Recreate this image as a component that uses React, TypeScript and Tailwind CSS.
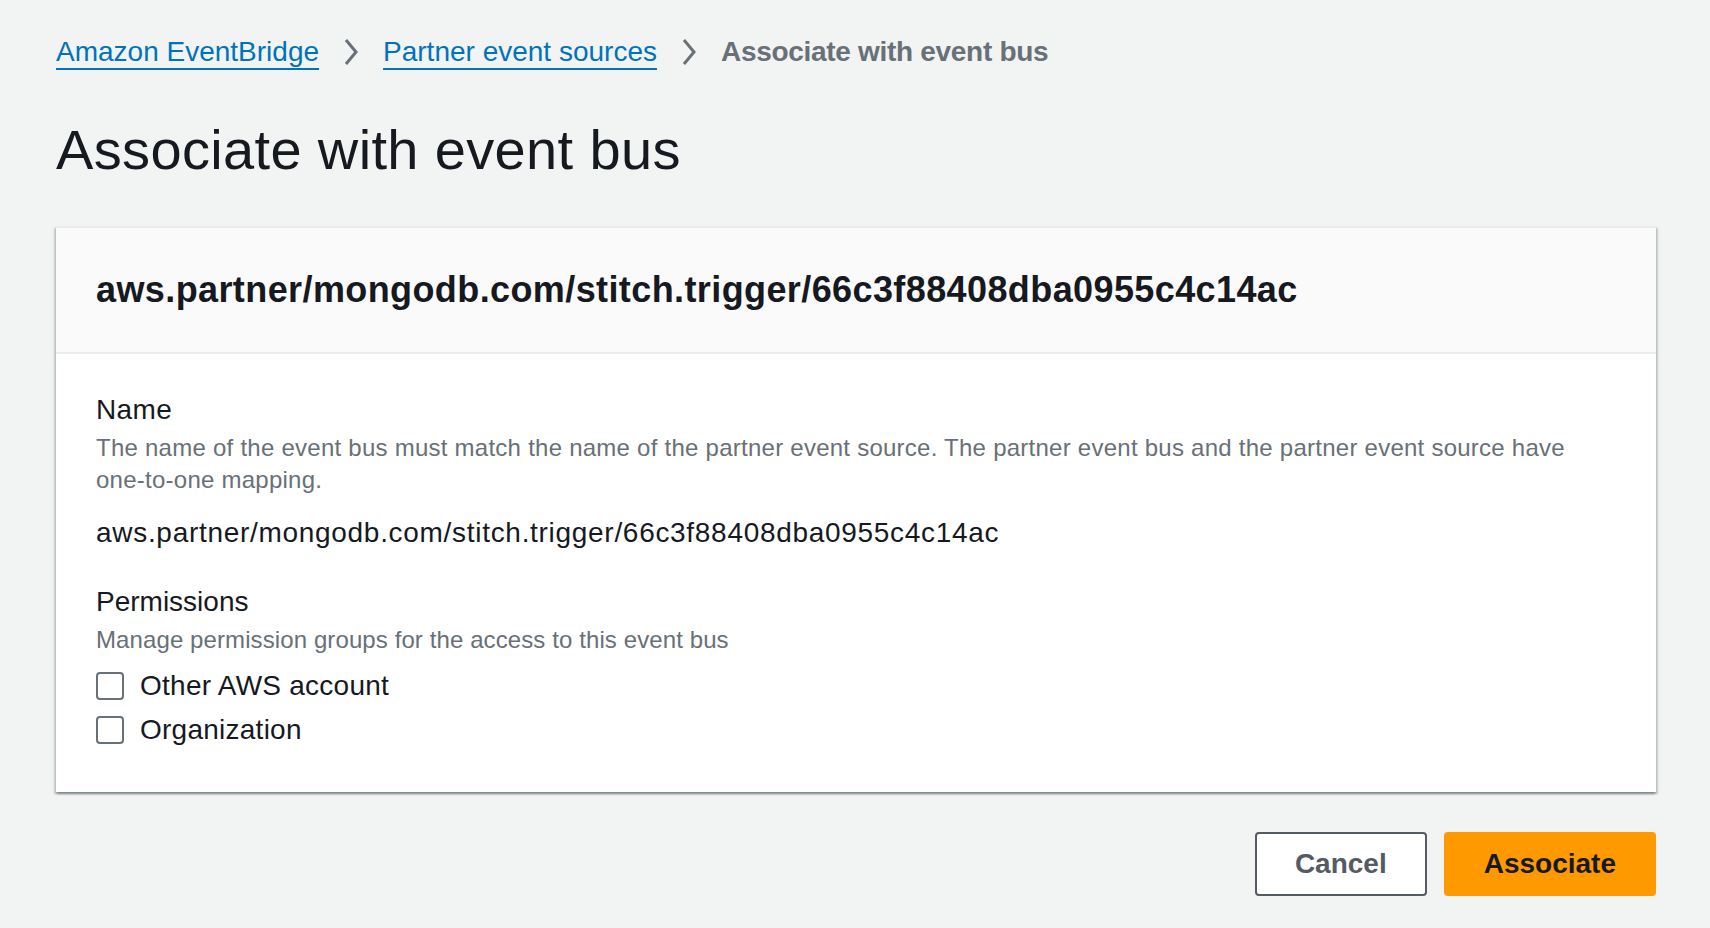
import React from 'react';

const SOURCE = 'aws.partner/mongodb.com/stitch.trigger/66c3f88408dba0955c4c14ac';

function Chevron() {
  return (
    <svg width="16" height="28" viewBox="0 0 16 28" fill="none" className="shrink-0">
      <polyline points="3,2 13,14 3,26" stroke="#687078" strokeWidth="3" strokeLinejoin="miter" />
    </svg>
  );
}

function Checkbox({ label }: { label: string }) {
  return (
    <label className="flex items-center gap-4 h-[44px]">
      <span className="w-[28px] h-[28px] rounded-[4px] border-2 border-[#687078] bg-white shrink-0" />
      <span className="text-[28px] leading-[40px] tracking-[0.25px] text-[#16191f]">{label}</span>
    </label>
  );
}

export default function App() {
  return (
    <div
      className="min-h-screen bg-[#f2f3f3] pl-[56px] pr-[54px] pt-[32px] pb-8"
      style={{ fontFamily: '"Liberation Sans", Arial, sans-serif' }}
    >
      <nav className="flex items-center gap-6 text-[28px] leading-[40px]">
        <a
          href="#"
          className="text-[#0073bb] underline decoration-2 underline-offset-[7px]"
        >
          Amazon EventBridge
        </a>
        <Chevron />
        <a
          href="#"
          className="text-[#0073bb] underline decoration-2 underline-offset-[7px]"
        >
          Partner event sources
        </a>
        <Chevron />
        <span className="font-bold tracking-[-0.3px] text-[#687078]">Associate with event bus</span>
      </nav>

      <h1 className="mt-[42px] text-[56px] leading-[72px] font-normal tracking-[0.35px] text-[#16191f]">
        Associate with event bus
      </h1>

      <div className="mt-[40px] bg-white border-t-2 border-[#eaeded] shadow-[0_2px_2px_0_rgba(0,28,36,0.3),2px_2px_2px_0_rgba(0,28,36,0.15),-2px_2px_2px_0_rgba(0,28,36,0.15)]">
        <div className="h-[126px] flex items-center px-[40px] bg-[#fafafa] border-b-2 border-[#eaeded]">
          <h2 className="text-[36px] leading-[48px] font-bold tracking-[0.4px] text-[#16191f]">{SOURCE}</h2>
        </div>

        <div className="px-[40px] pt-[36px] pb-[40px]">
          <div className="text-[28px] leading-[40px] tracking-[0.4px] text-[#16191f]">Name</div>
          <p className="mt-[2px] text-[24px] leading-[32px] tracking-[0.25px] text-[#687078]">
            The name of the event bus must match the name of the partner event source. The partner event bus and the
            partner event source have one-to-one mapping.
          </p>
          <div className="mt-[17px] text-[28px] leading-[40px] tracking-[0.7px] text-[#16191f]">{SOURCE}</div>

          <div className="mt-[29px] text-[28px] leading-[40px] text-[#16191f]">Permissions</div>
          <p className="mt-[2px] text-[24px] leading-[32px] tracking-[0.1px] text-[#687078]">
            Manage permission groups for the access to this event bus
          </p>
          <div className="mt-[8px] flex flex-col">
            <Checkbox label="Other AWS account" />
            <Checkbox label="Organization" />
          </div>
        </div>
      </div>

      <div className="mt-[40px] flex justify-end gap-[17px]">
        <button className="h-[64px] px-[38px] border-2 border-[#545b64] rounded-[4px] bg-white text-[28px] font-bold text-[#545b64]">
          Cancel
        </button>
        <button className="h-[64px] px-[40px] rounded-[4px] bg-[#ff9900] text-[28px] font-bold text-[#16191f]">
          Associate
        </button>
      </div>
    </div>
  );
}
